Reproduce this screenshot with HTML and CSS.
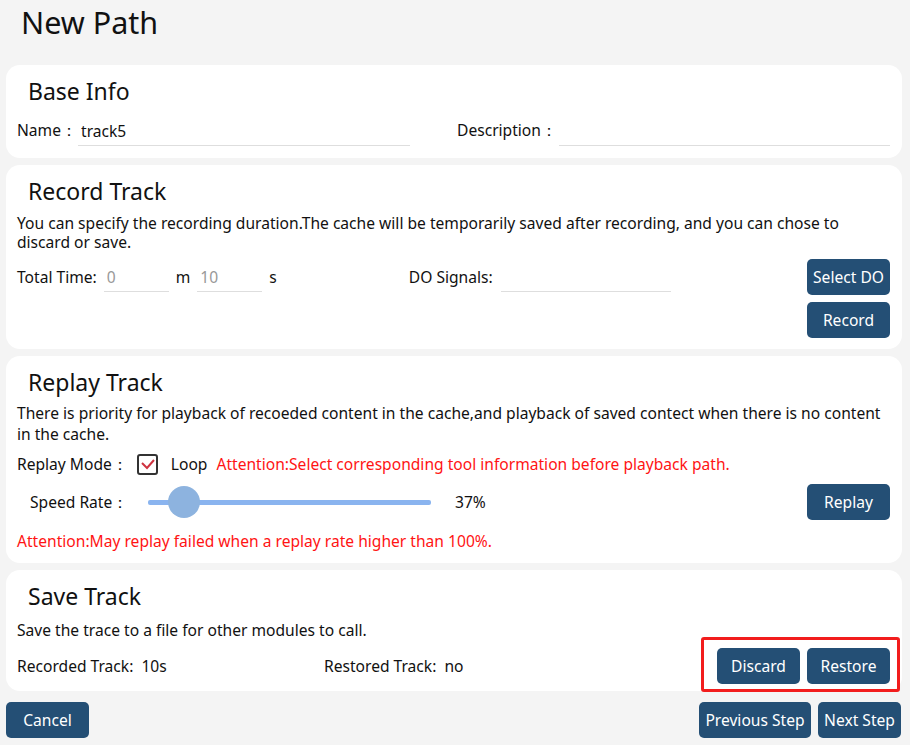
FILE: index.html
```html
<!DOCTYPE html>
<html lang="en">
<head>
  <meta charset="UTF-8" />
  <title>New Path</title>
  <link rel="stylesheet" href="styles.css">
</head>
<body>
  <div class="page">
    <h1 class="page-title">New Path</h1>

    <!-- Base info -->
    <section class="card card-base">
      <h2>Base Info</h2>
      <div class="info-grid">
        <div class="field">
          <label class="name-label">Name：</label>
          <input class="line-input" type="text" value="track5" />
        </div>
        <div class="field">
          <label class="desc-label">Description：</label>
          <input class="line-input" type="text" />
        </div>
      </div>
    </section>

    <!-- Record -->
    <section class="card card-record">
      <h2>Record Track</h2>
      <p class="desc">You can specify the recording duration.The cache will be temporarily saved after recording, and you can chose to discard or save.</p>
      <div class="record-body">
        <div class="record-row">
          <span class="lbl">Total Time:</span>
          <input class="line-input time-input" type="text" value="0" />
          <span class="unit">m</span>
          <input class="line-input time-input" type="text" value="10" />
          <span class="unit">s</span>
          <span class="lbl do-label">DO Signals:</span>
          <input class="line-input do-input" type="text" />
        </div>
        <div class="btn-col">
          <button class="btn">Select DO</button>
          <button class="btn">Record</button>
        </div>
      </div>
    </section>

    <!-- Replay -->
    <section class="card card-replay">
      <h2>Replay Track</h2>
      <p class="desc">There is priority for playback of recoeded content in the cache,and playback of saved contect when there is no content in the cache.</p>
      <div class="mode-row">
        <span class="lbl">Replay Mode：</span>
        <span class="check">
          <svg width="17" height="17" viewBox="0 0 17 17"><polyline points="3,7 8,12 15,4" fill="none" stroke="#cf3340" stroke-width="2" /></svg>
        </span>
        <span class="loop">Loop</span>
        <span class="warn">Attention:Select corresponding tool information before playback path.</span>
      </div>
      <div class="speed-row">
        <span class="lbl speed-label">Speed Rate：</span>
        <input class="slider" type="range" min="30" max="120" value="37" />
        <span class="pct">37%</span>
        <button class="btn replay-btn">Replay</button>
      </div>
      <p class="warn warn-line">Attention:May replay failed when a replay rate higher than 100%.</p>
    </section>

    <!-- Save -->
    <section class="card card-save">
      <h2>Save Track</h2>
      <p class="desc">Save the trace to a file for other modules to call.</p>
      <div class="save-row">
        <span class="lbl rec-label">Recorded Track:&nbsp; 10s</span>
        <span class="lbl">Restored Track:&nbsp; no</span>
        <div class="save-btns">
          <button class="btn">Discard</button>
          <button class="btn">Restore</button>
        </div>
      </div>
    </section>

    <div class="footer">
      <button class="btn">Cancel</button>
      <div class="footer-right">
        <button class="btn btn-wide">Previous Step</button>
        <button class="btn">Next Step</button>
      </div>
    </div>
  </div>
</body>
</html>
```

FILE: styles.css
```css
* {
  margin: 0;
  padding: 0;
  box-sizing: border-box;
}

html, body {
  height: 100%;
  background: #f4f4f4;
  font-family: "Noto Sans", "Open Sans", sans-serif;
  font-size: 15.6px;
  color: #111;
  overflow: hidden;
}

.page {
  padding: 0 8px 0 6px;
}

.page-title {
  font-size: 30.5px;
  font-weight: normal;
  line-height: 45px;
  padding-left: 15px;
  margin-bottom: 20px;
}

.card {
  background: #fff;
  border-radius: 14px;
  padding: 10px 12px 0 11px;
  margin-bottom: 7px;
}

.card h2 {
  font-size: 23px;
  font-weight: normal;
  line-height: 32px;
  padding-left: 11px;
}

.desc {
  line-height: 19px;
}

.lbl {
  white-space: nowrap;
}

.line-input {
  border: none;
  border-bottom: 1px solid #dedede;
  font: inherit;
  color: #111;
  height: 30px;
  padding: 0 3px;
  outline: none;
  background: transparent;
}

/* base info */
.card-base {
  height: 93px;
}

.info-grid {
  display: grid;
  grid-template-columns: 393px 1fr;
  column-gap: 47px;
  margin-top: 7px;
}

.field {
  display: flex;
  align-items: center;
  height: 32px;
}

.field .line-input {
  flex: 1;
  align-self: flex-end;
}

.name-label {
  width: 61px;
}

.desc-label {
  width: 102px;
}

/* record */
.card-record {
  height: 184px;
}

.card-record .desc {
  margin-top: 7px;
}

.record-body {
  display: flex;
  justify-content: space-between;
  margin-top: 7px;
}

.record-row {
  display: flex;
  align-items: center;
  height: 36px;
}

.time-input {
  color: #999;
  width: 65px;
  margin-left: 7px;
}

.unit {
  margin-left: 7px;
}

.do-label {
  margin-left: 132px;
}

.do-input {
  width: 170px;
  margin-left: 8px;
}

.btn-col {
  display: flex;
  flex-direction: column;
  gap: 7px;
}

.btn {
  width: 83px;
  height: 36px;
  background: #244f75;
  color: #fff;
  border: none;
  border-radius: 5px;
  font: inherit;
  cursor: pointer;
}

.btn-wide {
  width: 112px;
}

/* replay */
.card-replay {
  height: 207px;
}

.card-replay .desc {
  margin-top: 5px;
  line-height: 21px;
}

.mode-row {
  display: flex;
  align-items: center;
  height: 28px;
  margin-top: 5px;
}

.check {
  width: 21px;
  height: 21px;
  border: 2px solid #333;
  border-radius: 3px;
  margin-left: 9px;
  display: flex;
  align-items: center;
  justify-content: center;
}

.loop {
  margin-left: 13px;
}

.warn {
  color: #ff1414;
}

.mode-row .warn {
  margin-left: 9px;
}

.speed-row {
  display: flex;
  align-items: center;
  height: 36px;
  margin-top: 6px;
}

.speed-label {
  margin-left: 13px;
  width: 118px;
}

.slider {
  -webkit-appearance: none;
  appearance: none;
  width: 283px;
  height: 32px;
  background: transparent;
}

.slider::-webkit-slider-runnable-track {
  height: 5px;
  background: #8ab4ef;
  border-radius: 2px;
}

.slider::-webkit-slider-thumb {
  -webkit-appearance: none;
  width: 32px;
  height: 32px;
  margin-top: -14px;
  border-radius: 50%;
  background: #8db3df;
}

.pct {
  margin-left: 24px;
}

.replay-btn {
  margin-left: auto;
}

.warn-line {
  margin-top: 11px;
  line-height: 20px;
}

/* save */
.card-save {
  height: 121px;
}

.card-save .desc {
  margin-top: 8px;
  line-height: 20px;
}

.save-row {
  display: flex;
  align-items: center;
  margin-top: 8px;
}

.rec-label {
  width: 307px;
}

.save-btns {
  position: relative;
  margin-left: auto;
  display: flex;
  gap: 7px;
}

/* red annotation frame round the buttons */
.save-btns::after {
  content: "";
  position: absolute;
  left: -16px;
  right: -10px;
  top: -11px;
  bottom: -8px;
  border: 3px solid #f21d1d;
  border-radius: 3px;
}

.footer {
  display: flex;
  justify-content: space-between;
  margin-top: 11px;
  margin-right: 1px;
}

.footer-right {
  display: flex;
  gap: 7px;
}
```
